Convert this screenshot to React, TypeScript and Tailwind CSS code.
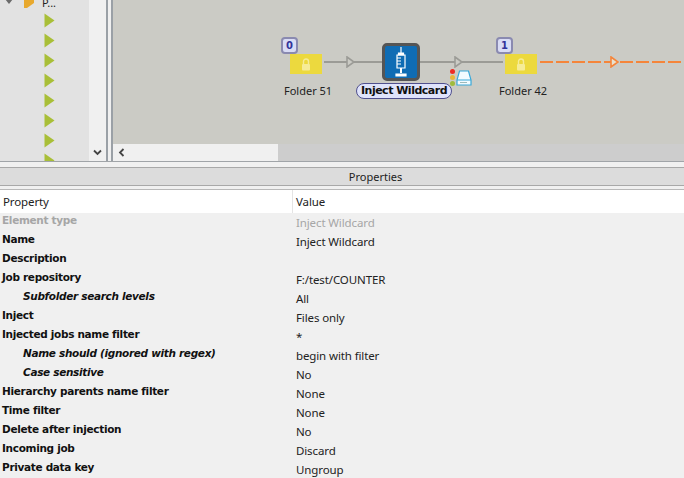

const rows: [string, string, number][] = [
  ["Name", "Inject Wildcard", 0],
  ["Description", "", 0],
  ["Job repository", "F:/test/COUNTER", 0],
  ["Subfolder search levels", "All", 1],
  ["Inject", "Files only", 0],
  ["Injected jobs name filter", "*", 0],
  ["Name should (ignored with regex)", "begin with filter", 1],
  ["Case sensitive", "No", 1],
  ["Hierarchy parents name filter", "None", 0],
  ["Time filter", "None", 0],
  ["Delete after injection", "No", 0],
  ["Incoming job", "Discard", 0],
  ["Private data key", "Ungroup", 0],
];

function Row({ name, val, indent, muted }: { name: string; val: string; indent: boolean; muted?: boolean }) {
  return (
    <div className="flex h-[19px] shrink-0">
      <div className={`w-[296px] shrink-0 leading-[14px] tracking-[-0.32px] font-['DejaVu_Sans'] text-[10.5px] font-bold ${muted ? "text-[#a6a6a6]" : "text-[#111]"} ${indent ? "pl-[23px] italic" : "pl-[2px]"}`}>{name}</div>
      <div className={`font-['Noto_Sans'] text-[11.5px] tracking-[-0.12px] leading-[19px] ${muted ? "text-[#a6a6a6]" : "text-[#222]"}`}>{val}</div>
    </div>
  );
}

function Arrow({ stroke, fill }: { stroke: string; fill: string }) {
  return (
    <svg width="9" height="12" viewBox="0 0 9 12" className="block">
      <path d="M1 1 L8 6 L1 11 Z" fill={fill} stroke={stroke} strokeWidth="1.6" />
    </svg>
  );
}

function Folder({ left, badge, name }: { left: number; badge: string; name: string }) {
  return (
    <>
      <div className="absolute top-[54px] h-[20px] w-[32px] bg-[#ecd93e] flex items-center justify-center" style={{ left }}>
        <svg width="10" height="13" viewBox="0 0 10 13">
          <path d="M2.5 6V3.5a2.5 2.5 0 0 1 5 0V6" fill="none" stroke="#f6ec97" strokeWidth="1.4" />
          <rect x="1" y="6" width="8" height="6.5" rx="1" fill="#f6ec97" />
        </svg>
      </div>
      <div className="absolute top-[37px] h-[17px] w-[17px] rounded-[4px] border-2 border-[#8a8ab0] bg-[#d9dcf5] flex items-center justify-center font-['DejaVu_Sans'] text-[10px] font-bold text-[#33339a]" style={{ left: left - 9 }}>
        {badge}
      </div>
      <div className="absolute top-[84px] font-['Noto_Sans'] text-[11px] leading-[14px] text-[#222] whitespace-nowrap" style={{ left: left - 6 }}>{name}</div>
    </>
  );
}

export default function App() {
  return (
    <div className="flex h-[478px] w-[684px] flex-col overflow-hidden bg-[#f0f0f0]">
      <div className="flex h-[162px] shrink-0 gap-[3px] border-b border-[#a0a4a8]">
        <div className="relative flex w-[108px] shrink-0 border-r-2 border-[#9aa0a6] bg-[#e2e2e2]">
          <div className="relative flex-1 overflow-hidden">
            <svg width="12" height="10" viewBox="0 0 12 10" className="absolute left-[2px] top-[-4px]">
              <path d="M3 3 L11 3 L7 8 Z" fill="#6b6b6b" />
            </svg>
            <svg width="11" height="9" viewBox="0 0 11 9" className="absolute left-[24px] top-0">
              <path d="M0 0 H10 V3 L3 8 H0 Z" fill="#e8a92e" />
            </svg>
            <div className="absolute left-[42px] top-[-4px] font-['Noto_Sans'] text-[11px] leading-[14px] text-[#222]">P...</div>
            <div className="flex flex-col items-start gap-[5px] pl-[44px] pt-[13px]">
              {[0, 1, 2, 3, 4, 5, 6, 7].map((i) => (
                <svg key={i} width="11" height="15" viewBox="0 0 11 15" className="shrink-0 block">
                  <path d="M0.5 0.5 L10.5 7.5 L0.5 14.5 Z" fill="#a9bf38" />
                </svg>
              ))}
            </div>
          </div>
          <div className="flex w-[17px] shrink-0 flex-col justify-end bg-[#f0f0f0]">
            <div className="flex h-[17px] items-center justify-center">
              <svg width="9" height="7" viewBox="0 0 9 7"><path d="M1 1.5 L4.5 5 L8 1.5" fill="none" stroke="#444" strokeWidth="1.8" /></svg>
            </div>
          </div>
        </div>
        <div className="flex min-w-0 flex-1 flex-col border-l-2 border-[#9aa0a6]">
          <div className="relative flex-1 bg-[#cbcbc5]">
            <div className="absolute left-[-113px] top-0 h-[143px] w-[684px]">
              <div className="absolute left-[324px] top-[61px] h-[2px] w-[60px] bg-[#9b9b96]" />
              <div className="absolute left-[346px] top-[56px]"><Arrow stroke="#9b9b96" fill="#cbcbc5" /></div>
              <div className="absolute left-[419px] top-[61px] h-[2px] w-[84px] bg-[#9b9b96]" />
              <div className="absolute left-[454px] top-[56px]"><Arrow stroke="#9b9b96" fill="#cbcbc5" /></div>
              <div className="absolute left-[540px] top-[61px] h-[2px] w-[144px] bg-[repeating-linear-gradient(90deg,#f5853a_0,#f5853a_13px,transparent_13px,transparent_16px)]" />
              <div className="absolute left-[610px] top-[56px]"><Arrow stroke="#f5853a" fill="#e8e2d0" /></div>

              <Folder left={290} badge="0" name="Folder 51" />
              <Folder left={505} badge="1" name="Folder 42" />

              <div className="absolute left-[382px] top-[43px] flex h-[38px] w-[38px] items-center justify-center rounded-[5px] border-[3px] border-[#555] bg-[#0f6cb4]">
                <svg width="16" height="30" viewBox="0 0 16 30" fill="none" stroke="#fff" strokeWidth="1.2">
                  <path d="M8 0 V6" />
                  <path d="M5.5 6 H10.5 V8 H5.5 Z" fill="#fff" />
                  <path d="M4 8 H12 V21 H4 Z" />
                  <path d="M4 11 H8 M4 14 H8 M4 17 H8" />
                  <path d="M8 21 V26" strokeWidth="2" />
                  <path d="M3 27 H13 V29 H3 Z" fill="#fff" />
                </svg>
              </div>
              <div className="absolute left-[356px] top-[83px] flex h-[16px] w-[96px] items-center justify-center rounded-full border border-[#50508e] bg-[#dfe3fb] font-['DejaVu_Sans'] text-[11px] font-bold tracking-[-0.5px] text-[#111] whitespace-nowrap">
                Inject Wildcard
              </div>
              <div className="absolute left-[450px] top-[69px] h-[5px] w-[5px] rounded-full bg-[#ee2a24]" />
              <div className="absolute left-[450px] top-[75px] h-[5px] w-[5px] rounded-full bg-[#e8b63a]" />
              <div className="absolute left-[450px] top-[81px] h-[5px] w-[5px] rounded-full bg-[#9fbb3d]" />
              <svg width="16" height="16" viewBox="0 0 16 16" className="absolute left-[456px] top-[70px]">
                <path d="M3.5 1 H12.5 L15 10 V15 H1 V10 Z" fill="#f2fbff" stroke="#39a8d8" strokeWidth="1.2" />
                <path d="M1 10 H15" stroke="#39a8d8" strokeWidth="1" />
                <path d="M4 12.5 H11" stroke="#8aa" strokeWidth="0.8" />
              </svg>
            </div>
          </div>
          <div className="flex h-[17px] shrink-0 bg-[#f0f0f0]">
            <div className="flex w-[165px] shrink-0 items-center pl-[5px]">
              <svg width="7" height="9" viewBox="0 0 7 9"><path d="M5.5 1 L2 4.5 L5.5 8" fill="none" stroke="#444" strokeWidth="1.8" /></svg>
            </div>
            <div className="flex-1 bg-[#cdcdcd]" />
          </div>
        </div>
      </div>
      <div className="h-[5px] shrink-0 bg-[#f0f0f0]" />
      <div className="flex h-[19px] shrink-0 items-center justify-center border-y border-[#a8a8a8] bg-[#dcdcdc] pl-[67px] pt-[2px] font-['Noto_Sans'] text-[11px] text-[#222]">
        Properties
      </div>
      <div className="h-[4px] shrink-0 border-b border-[#b8b8b8] bg-[#f0f0f0]" />
      <div className="flex h-[23px] shrink-0 bg-white font-['Noto_Sans'] text-[11.5px] tracking-[-0.12px] text-[#222]">
        <div className="flex w-[293px] shrink-0 items-center border-r border-[#e4e4e4] pl-[3px]">Property</div>
        <div className="flex items-center pl-[3px]">Value</div>
      </div>
      <div className="flex flex-1 flex-col bg-[#f0f0f0]">
        <Row name="Element type" val="Inject Wildcard" indent={false} muted />
        {rows.map(([n, v, i]) => (
          <Row key={n} name={n} val={v} indent={i === 1} />
        ))}
      </div>
    </div>
  );
}
